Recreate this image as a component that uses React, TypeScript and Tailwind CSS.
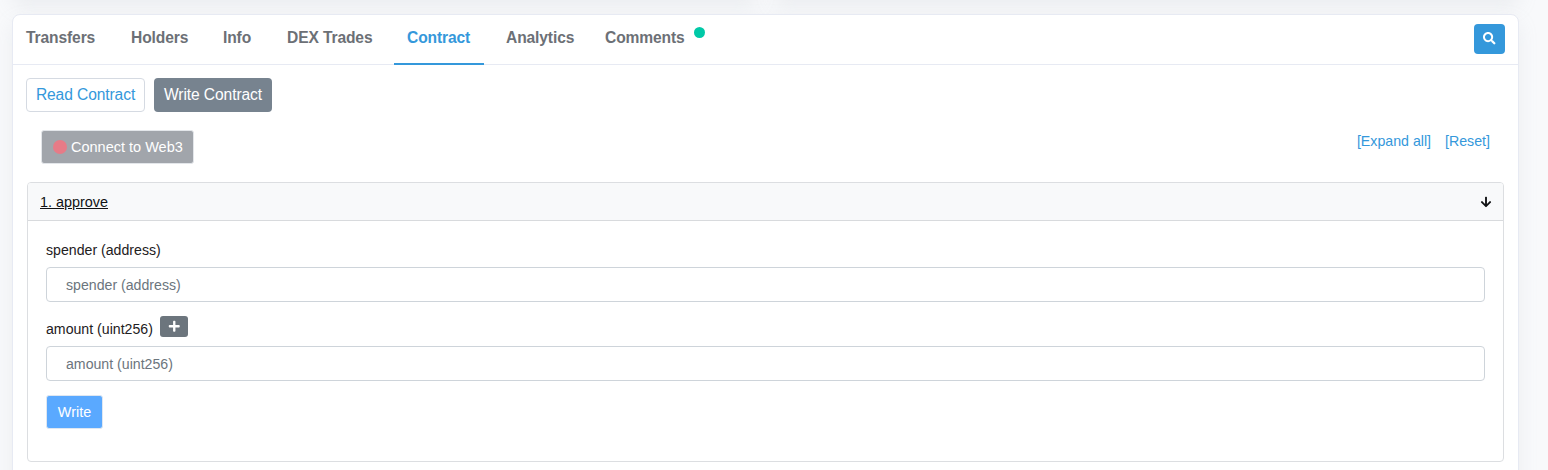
import React from "react";
import { FaSearch, FaPlus, FaArrowDown } from "react-icons/fa";

const cardShadow = "shadow-[0_8px_19px_rgba(165,175,182,0.15)]";

function Tab({ label, className, active = false }: { label: string; className: string; active?: boolean }) {
  return (
    <button
      className={`relative flex h-[50px] items-start whitespace-nowrap pt-[14px] text-left text-[15.6px] leading-[18px] font-bold tracking-[-0.12px] ${
        active ? "text-[#3498db]" : "text-[#6c7076]"
      } ${className}`}
    >
      {label}
      {active && <span className="absolute bottom-0 left-0 h-[2px] w-full bg-[#3498db]" />}
    </button>
  );
}

function Field({ label, addable = false }: { label: string; addable?: boolean }) {
  return (
    <div className="h-[79px]">
      <div className="flex h-[31px] items-start">
        <label className="pt-[6px] text-[14.15px] leading-[18px] text-[#1e2022]">{label}</label>
        {addable && (
          <button className="ml-[7px] mt-[2px] flex h-[21px] w-[28px] items-center justify-center rounded-[3px] bg-[#6c757d] text-white">
            <FaPlus size={12.5} />
          </button>
        )}
      </div>
      <input
        placeholder={label}
        className="mt-[1px] block h-[35px] w-full rounded-[4px] border border-[#ced4da] bg-white pl-[19px] pt-px text-[14.15px] text-[#1e2022] placeholder:text-[#6c757d]"
      />
    </div>
  );
}

export default function App() {
  return (
    <div className="h-[470px] overflow-hidden bg-[#f8f9fb] font-['Liberation_Sans',Arial,sans-serif]">
      <div className="-mt-[60px] mb-[15px] ml-[12px] flex h-[59px] w-[1507px] gap-[15px]">
        <div className={`flex-1 rounded-[8px] bg-white ${cardShadow}`} />
        <div className={`flex-1 rounded-[8px] bg-white ${cardShadow}`} />
      </div>
      <main className={`relative ml-[12px] h-[500px] w-[1507px] rounded-[8px] border border-[#e7eaf3] bg-white ${cardShadow}`}>
        <nav className="flex h-[50px] border-b border-[#e7eaf3]">
          <Tab label="Transfers" className="ml-[13px] w-[105px]" />
          <Tab label="Holders" className="w-[92px]" />
          <Tab label="Info" className="w-[64px]" />
          <Tab label="DEX Trades" className="w-[107px]" />
          <Tab label="Contract" className="w-[90px] pl-[13px]" active />
          <Tab label="Analytics" className="ml-[22px] w-[99px]" />
          <Tab label="Comments" className="w-[80px]" />
          <span className="ml-[9px] mt-[12px] size-[11px] rounded-full bg-[#00c9a7]" />
          <button className="ml-auto mr-[13px] mt-[9px] flex h-[30px] w-[31px] items-center justify-center rounded-[4px] bg-[#3498db] pb-px text-white">
            <FaSearch size={12.5} />
          </button>
        </nav>

        <div className="flex gap-[9px] pl-[13px] pt-[13px] text-[15.6px] tracking-[-0.1px]">
          <button className="h-[34px] w-[119px] whitespace-nowrap rounded-[4px] border border-[#d5dae2] text-[#3498db]">Read Contract</button>
          <button className="h-[34px] w-[118px] whitespace-nowrap rounded-[4px] bg-[#77838f] text-white">Write Contract</button>
        </div>

        <div className="flex items-start justify-between pl-[28px] pr-[28px] pt-[18px]">
          <button className="flex h-[34px] w-[153px] items-center rounded-[3px] border border-[#e3e6ea] bg-[#a1a5ab] pl-[11px] text-[14.5px] whitespace-nowrap text-white">
            <span className="mr-[4px] size-[14px] shrink-0 rounded-full bg-[#e77b87]" />
            <span className="pt-[2px]">Connect to Web3</span>
          </button>
          <div className="flex gap-[14px] pt-[2px] text-[14.2px] leading-[18px] text-[#3498db]">
            <a>[Expand all]</a>
            <a>[Reset]</a>
          </div>
        </div>

        <section className="ml-[14px] mt-[18px] h-[280px] w-[1477px] rounded-[4px] border border-[#dcdee1]">
          <header className="flex h-[38px] items-center justify-between rounded-t-[3px] border-b border-[#d8dadd] bg-[#f8f9fa] pl-[12px] pr-[11px] text-[#111214]">
            <span className="pt-[2px] text-[14.4px] underline">1. approve</span>
            <FaArrowDown size={12} />
          </header>
          <div className="px-[18px] pt-[14px]">
            <Field label="spender (address)" />
            <Field label="amount (uint256)" addable />
            <button className="mt-[2px] h-[34px] w-[57px] rounded-[3px] border border-[#dfe7f1] bg-[#5aa9ff] pt-[2px] text-[14.4px] text-white">Write</button>
          </div>
        </section>
      </main>
    </div>
  );
}
